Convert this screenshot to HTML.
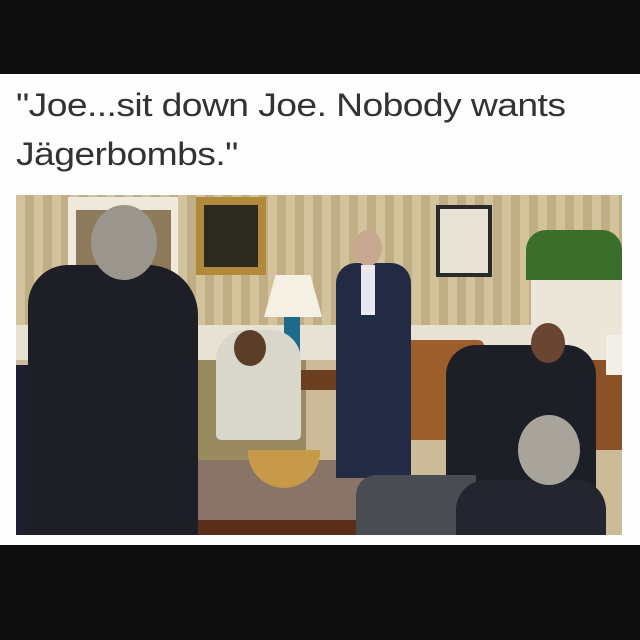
<!DOCTYPE html><html><head><style>
body{margin:0;width:640px;height:640px;background:#0e0e0e;position:relative;overflow:hidden;font-family:"Liberation Sans",sans-serif}
.w{position:absolute;left:0;top:74px;width:640px;height:471px;background:#fdfdfd}
.t{position:absolute;left:16px;font-size:32px;color:#333;letter-spacing:-0.5px;white-space:nowrap;transform:scaleX(1.165);transform-origin:0 0}
.p{position:absolute;left:16px;top:195px;width:606px;height:340px;overflow:hidden;background:repeating-linear-gradient(90deg,#d3c39c 0 9px,#c2ae84 9px 18px)}
.p div{position:absolute}
</style></head><body>
<div class="w"></div>
<div class="t" style="top:87px">"Joe...sit down Joe. Nobody wants</div>
<div class="t" style="top:136px">Jägerbombs."</div>
<div class="p">
<div style="left:0;top:130px;width:606px;height:40px;background:#e8e2d4"></div>
<div style="left:0;top:165px;width:606px;height:175px;background:#cbbb98"></div>
<div style="left:52px;top:2px;width:110px;height:100px;background:#efe9dc"></div>
<div style="left:60px;top:15px;width:95px;height:80px;background:#8d7a5a"></div>
<div style="left:180px;top:2px;width:70px;height:78px;background:#b08a3a"></div>
<div style="left:188px;top:10px;width:54px;height:62px;background:#2d2a22"></div>
<div style="left:420px;top:10px;width:56px;height:72px;background:#2a2a2a"></div>
<div style="left:424px;top:14px;width:48px;height:64px;background:#e8e3d6"></div>
<div style="left:510px;top:35px;width:96px;height:50px;background:#3b6e2a;border-radius:20px 20px 0 0"></div>
<div style="left:515px;top:85px;width:91px;height:80px;background:#ece6d8"></div>
<div style="left:248px;top:80px;width:58px;height:42px;background:#f4f0e4;clip-path:polygon(20% 0,80% 0,100% 100%,0 100%)"></div>
<div style="left:268px;top:122px;width:16px;height:48px;background:#1d6a8a"></div>
<div style="left:170px;top:165px;width:120px;height:110px;background:#9a8a60"></div>
<div style="left:260px;top:175px;width:90px;height:20px;background:#6a3e1e"></div>
<div style="left:378px;top:145px;width:90px;height:100px;background:#9c5e2a;border-radius:6px"></div>
<div style="left:545px;top:165px;width:61px;height:90px;background:#8a5226"></div>
<div style="left:182px;top:265px;width:170px;height:75px;background:#8a7468"></div>
<div style="left:182px;top:325px;width:170px;height:15px;background:#5a2e18"></div>
<div style="left:232px;top:255px;width:72px;height:38px;background:#c79a4a;border-radius:0 0 36px 36px"></div>
<div style="left:200px;top:135px;width:85px;height:110px;background:#d9d6cc;border-radius:30px 30px 5px 5px"></div>
<div style="left:218px;top:135px;width:32px;height:36px;background:#5a3e28;border-radius:50%"></div>
<div style="left:320px;top:68px;width:75px;height:215px;background:#232a44;border-radius:20px 20px 0 0"></div>
<div style="left:338px;top:35px;width:28px;height:36px;background:#c8a890;border-radius:50%"></div>
<div style="left:345px;top:70px;width:14px;height:50px;background:#e8e8ee"></div>
<div style="left:430px;top:150px;width:150px;height:170px;background:#1d1f26;border-radius:30px 30px 0 0"></div>
<div style="left:515px;top:128px;width:34px;height:40px;background:#6a4632;border-radius:50%"></div>
<div style="left:340px;top:280px;width:120px;height:60px;background:#4a4c54;border-radius:20px 0 0 0"></div>
<div style="left:440px;top:285px;width:150px;height:55px;background:#23262e;border-radius:30px 30px 0 0"></div>
<div style="left:502px;top:220px;width:62px;height:70px;background:#a8a49c;border-radius:50%"></div>
<div style="left:590px;top:140px;width:16px;height:40px;background:#f2efe6"></div>
<div style="left:0;top:170px;width:40px;height:170px;background:#1c1f2e"></div>
<div style="left:12px;top:70px;width:170px;height:270px;background:#1d1e26;border-radius:40px 50px 0 0"></div>
<div style="left:75px;top:10px;width:66px;height:75px;background:#9a968e;border-radius:50%"></div>
</div>
</body></html>
